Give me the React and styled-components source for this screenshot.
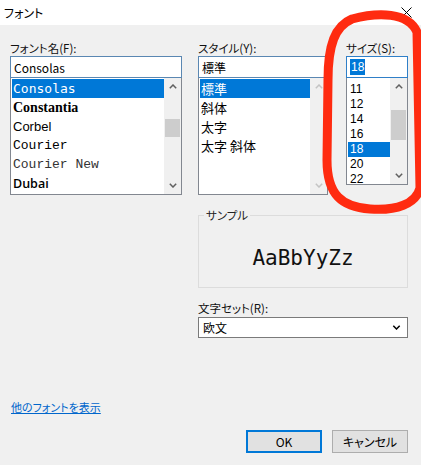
import React from "react";
import styled, { createGlobalStyle } from "styled-components";

const GlobalStyle = createGlobalStyle`
  html, body { margin: 0; padding: 0; background: #f0f0f0; }
  body { width: 421px; height: 465px; overflow: hidden; }
  * { box-sizing: border-box; }
`;

const UI_FONT = `"Noto Sans CJK JP", "Noto Sans", sans-serif`;

const Dialog = styled.div`
  position: relative;
  width: 421px;
  height: 465px;
  background: #f0f0f0;
  font-family: ${UI_FONT};
  font-size: 12px;
  color: #000;
  font-feature-settings: "palt";
  display: flex;
  flex-direction: column;
  overflow: hidden;
`;

const TitleBar = styled.div`
  height: 25px;
  flex: none;
  background: #fff;
  display: flex;
  align-items: center;
  justify-content: space-between;
  padding: 0 9px 0 4px;
  font-size: 12px;
`;

const Body = styled.div`
  flex: 1;
  display: flex;
  flex-direction: column;
  padding: 15px 13px 12px 10px;
`;

const TopRow = styled.div`
  display: flex;
  align-items: flex-start;
`;

const Column = styled.div`
  width: ${(p) => p.$width}px;
  margin-left: ${(p) => p.$ml || 0}px;
  display: flex;
  flex-direction: column;
`;

const Label = styled.div`
  height: 16px;
  line-height: 16px;
  font-size: 11.5px;
  white-space: nowrap;
  color: #111;
`;

const Edit = styled.div`
  height: 22px;
  background: #fff;
  border: 1px solid ${(p) => (p.$focused ? "#2f7fc8" : "#5a87b2")};
  padding-left: 3px;
  display: flex;
  align-items: center;
  font-size: 12px;
  white-space: nowrap;
`;

const SelectedText = styled.span`
  background: #0078d7;
  color: #fff;
  line-height: 16px;
  padding: 0 1px;
  font-family: "Liberation Sans", sans-serif;
`;

const ListBox = styled.div`
  height: ${(p) => p.$h}px;
  background: #fff;
  border: 1px solid #828790;
  border-top: none;
  display: flex;
  overflow: hidden;
`;

const Items = styled.div`
  flex: 1;
  min-width: 0;
  padding: ${(p) => p.$pt || 1}px 0 0 1px;
  display: flex;
  flex-direction: column;
`;

const Item = styled.div`
  flex: none;
  height: ${(p) => p.$rowH}px;
  line-height: ${(p) => p.$rowH}px;
  padding-left: ${(p) => p.$pl ?? 1}px;
  white-space: nowrap;
  overflow: hidden;
  font-family: ${(p) => p.$font || UI_FONT};
  font-size: ${(p) => p.$size || 13}px;
  font-weight: ${(p) => p.$weight || 400};
  background: ${(p) => (p.$selected ? "#0078d7" : "transparent")};
  color: ${(p) => (p.$selected ? "#fff" : p.$color || "#000")};
`;

const Scrollbar = styled.div`
  width: 17px;
  flex: none;
  background: #f0f0f0;
  display: flex;
  flex-direction: column;
`;

const ArrowBox = styled.div`
  height: 17px;
  flex: none;
  display: flex;
  align-items: center;
  justify-content: center;
  color: ${(p) => (p.$disabled ? "#c4c4c4" : "#606060")};
`;

const Track = styled.div`
  flex: 1;
`;

const Thumb = styled.div`
  margin-top: ${(p) => p.$top}px;
  height: ${(p) => p.$h}px;
  margin-left: 1px;
  margin-right: 1px;
  background: #cdcdcd;
`;

const LowerRow = styled.div`
  display: flex;
  padding-left: 188px;
`;

const RightPanel = styled.div`
  width: 210px;
  display: flex;
  flex-direction: column;
`;

const Group = styled.fieldset`
  margin: 13px 0 0 0;
  padding: 0;
  height: 80px;
  border: 1px solid #dcdcdc;
  min-width: 0;
`;

const Legend = styled.legend`
  margin-left: 5px;
  padding: 0 2px;
  font-size: 11.5px;
  line-height: 14px;
  color: #222;
`;

const SampleText = styled.div`
  margin-top: 24px;
  text-align: center;
  font-family: "DejaVu Sans Mono", "Liberation Mono", monospace;
  font-size: 21px;
  line-height: 24px;
  color: #111;
  font-feature-settings: normal;
`;

const CharsetLabel = styled(Label)`
  margin-top: 12px;
  height: 17px;
`;

const Select = styled.div`
  height: 21px;
  background: #fff;
  border: 1px solid #7a7a7a;
  display: flex;
  align-items: center;
  justify-content: space-between;
  padding: 0 6px 0 4px;
  font-size: 12px;
`;

const Footer = styled.div`
  flex: 1;
  display: flex;
  flex-direction: column;
  justify-content: flex-end;
`;

const MoreLink = styled.a`
  align-self: flex-start;
  margin-left: 1px;
  font-size: 11px;
  line-height: 15px;
  color: #0066cc;
  text-decoration: underline;
  cursor: pointer;
`;

const ButtonRow = styled.div`
  margin-top: 15px;
  display: flex;
  justify-content: flex-end;
  gap: 10px;
`;

const Button = styled.button`
  width: 76px;
  height: 23px;
  background: #e1e1e1;
  border: ${(p) => (p.$primary ? "2px solid #0078d7" : "1px solid #adadad")};
  font-family: ${UI_FONT};
  font-feature-settings: "palt";
  font-size: 12px;
  color: #000;
  padding: 0;
`;

const Annotation = styled.svg`
  position: absolute;
  left: 0;
  top: 0;
  pointer-events: none;
`;

const Chevron = ({ up, w = 8, h = 5 }) => (
  <svg width={w} height={h} viewBox="0 0 8 5">
    <polyline
      points={up ? "0.8,4.2 4,1 7.2,4.2" : "0.8,0.8 4,4 7.2,0.8"}
      fill="none"
      stroke="currentColor"
      strokeWidth="1.5"
    />
  </svg>
);

const CloseIcon = () => (
  <svg width="11" height="11" viewBox="0 0 11 11">
    <path d="M0.5 0.5 L10.5 10.5 M10.5 0.5 L0.5 10.5" stroke="#000" strokeWidth="1" />
  </svg>
);

const ListScroll = ({ disabled, thumbTop, thumbH }) => (
  <Scrollbar>
    <ArrowBox $disabled={disabled}>
      <Chevron up />
    </ArrowBox>
    <Track>{!disabled && <Thumb $top={thumbTop} $h={thumbH} />}</Track>
    <ArrowBox $disabled={disabled}>
      <Chevron />
    </ArrowBox>
  </Scrollbar>
);

const fonts = [
  { name: "Consolas", font: `"DejaVu Sans Mono", monospace`, size: 13, selected: true },
  { name: "Constantia", font: `"Liberation Serif", serif`, size: 14, weight: 700 },
  { name: "Corbel", font: `"Liberation Sans", sans-serif`, size: 13 },
  { name: "Courier", font: `"Liberation Mono", monospace`, size: 13 },
  { name: "Courier New", font: `"Liberation Mono", monospace`, size: 13, color: "#333" },
  { name: "Dubai", font: `"Open Sans", sans-serif`, size: 12.5, weight: 600 },
];

const styles = ["標準", "斜体", "太字", "太字 斜体"];
const sizes = ["11", "12", "14", "16", "18", "20", "22"];

export default function App() {
  return (
    <>
      <GlobalStyle />
      <Dialog>
        <TitleBar>
          <span>フォント</span>
          <CloseIcon />
        </TitleBar>
        <Body>
          <TopRow>
            <Column $width={172}>
              <Label>フォント名(F):</Label>
              <Edit>Consolas</Edit>
              <ListBox $h={117}>
                <Items>
                  {fonts.map((f) => (
                    <Item
                      key={f.name}
                      $rowH={19}
                      $font={f.font}
                      $size={f.size}
                      $weight={f.weight}
                      $color={f.color}
                      $selected={f.selected}
                    >
                      {f.name}
                    </Item>
                  ))}
                </Items>
                <ListScroll thumbTop={24} thumbH={18} />
              </ListBox>
            </Column>
            <Column $width={130} $ml={16}>
              <Label>スタイル(Y):</Label>
              <Edit>標準</Edit>
              <ListBox $h={117}>
                <Items>
                  {styles.map((s, i) => (
                    <Item key={s} $rowH={19} $size={13} $pl={1} $selected={i === 0}>
                      {s}
                    </Item>
                  ))}
                </Items>
                <ListScroll disabled />
              </ListBox>
            </Column>
            <Column $width={62} $ml={18}>
              <Label>サイズ(S):</Label>
              <Edit $focused>
                <SelectedText>18</SelectedText>
              </Edit>
              <ListBox $h={107}>
                <Items $pt={4}>
                  {sizes.map((s) => (
                    <Item
                      key={s}
                      $rowH={15}
                      $size={12}
                      $pl={2}
                      $font={`"Liberation Sans", sans-serif`}
                      $selected={s === "18"}
                    >
                      {s}
                    </Item>
                  ))}
                </Items>
                <ListScroll thumbTop={15} thumbH={30} />
              </ListBox>
            </Column>
          </TopRow>

          <LowerRow>
            <RightPanel>
              <Group>
                <Legend>サンプル</Legend>
                <SampleText>AaBbYyZz</SampleText>
              </Group>
              <CharsetLabel>文字セット(R):</CharsetLabel>
              <Select>
                <span>欧文</span>
                <Chevron w={9} h={5} />
              </Select>
            </RightPanel>
          </LowerRow>

          <Footer>
            <MoreLink>他のフォントを表示</MoreLink>
            <ButtonRow>
              <Button $primary>OK</Button>
              <Button>キャンセル</Button>
            </ButtonRow>
          </Footer>
        </Body>

        <Annotation width="421" height="465" viewBox="0 0 421 465">
          <path
            d="M352 19 C378 12 408 12 417 32 L420 188 C416 204 396 211 370 209 C342 207 327 195 327 160 L328 80 C328 45 335 26 352 19 Z"
            fill="none"
            stroke="#ff2b10"
            strokeWidth="9"
            strokeLinejoin="round"
          />
        </Annotation>
      </Dialog>
    </>
  );
}
